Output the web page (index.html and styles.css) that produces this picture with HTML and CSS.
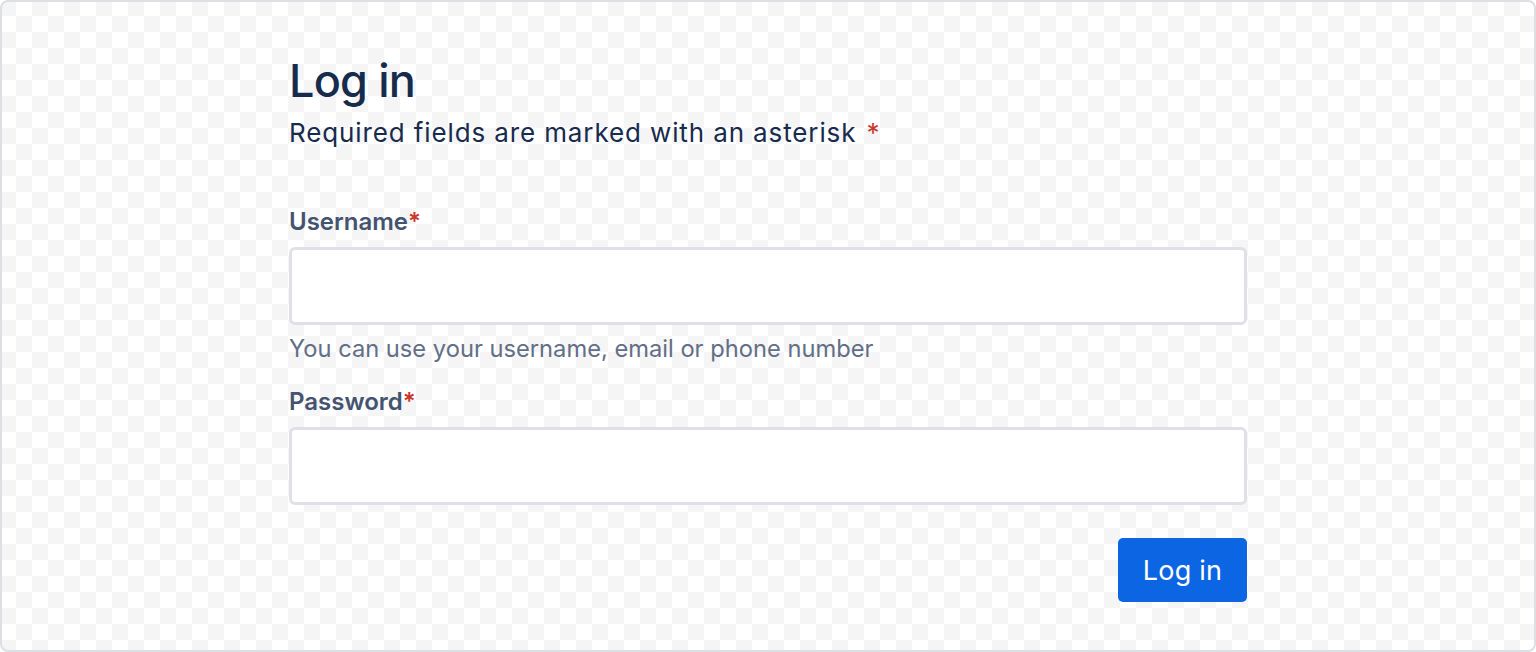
FILE: index.html
```html
<!DOCTYPE html>
<html lang="en">
<head>
<meta charset="utf-8">
<title>Log in</title>
<link rel="stylesheet" href="styles.css">
</head>
<body>
<div class="frame">
  <form class="login">
    <h1 class="title">Log in</h1>
    <p class="subtitle">Required fields are marked with an asterisk <span class="req">*</span></p>
    <div class="field field-first">
      <label class="label" for="username">Username<span class="req">*</span></label>
      <input class="input" id="username" type="text">
      <p class="helper">You can use your username, email or phone number</p>
    </div>
    <div class="field field-second">
      <label class="label" for="password">Password<span class="req">*</span></label>
      <input class="input" id="password" type="password">
    </div>
    <div class="actions">
      <button class="btn" type="button">Log in</button>
    </div>
  </form>
</div>
</body>
</html>
```

FILE: styles.css
```css
* { box-sizing: border-box; }
html, body { margin: 0; padding: 0; }
body {
  font-family: Inter, "Noto Sans", "Liberation Sans", sans-serif;
  color: #172b4d;
  background: #fff;
}
.frame {
  width: 1536px;
  height: 652px;
  border: 2px solid #dcdfe4;
  border-radius: 8px;
  background-color: #fff;
  background-image: conic-gradient(#ffffff 25%, #f5f5f5 0 50%, #ffffff 0 75%, #f5f5f5 0);
  background-size: 32px 32px;
  background-position: -2px -2px;
  overflow: hidden;
  display: flex;
  justify-content: center;
}
.login {
  width: 958px;
  padding-top: 51px;
  display: flex;
  flex-direction: column;
}
.title {
  margin: 0;
  font-size: 45px;
  font-weight: 500;
  line-height: 56px;
  color: #172b4d;
  letter-spacing: -0.8px;
}
.subtitle {
  margin: 8px 0 0;
  font-size: 26px;
  line-height: 32px;
  letter-spacing: 0.88px;
  color: #172b4d;
}
.subtitle .req { margin-left: 2px; }
.req { color: #c9372c; }
.field { display: flex; flex-direction: column; }
.field-first { margin-top: 59px; }
.field-second { margin-top: 25px; }
.label {
  font-size: 24px;
  font-weight: 600;
  line-height: 28px;
  color: #44546f;
  margin-bottom: 11px;
}
.input {
  display: block;
  width: 100%;
  height: 78px;
  border: 3px solid #dfe1e6;
  border-radius: 6px;
  background: #fff;
  outline: none;
  font: inherit;
}
.helper {
  margin: 10px 0 0;
  font-size: 23.7px;
  line-height: 28px;
  color: #626f86;
}
.actions {
  display: flex;
  justify-content: flex-end;
  margin-top: 33px;
}
.btn {
  width: 129px;
  height: 64px;
  border: 0;
  border-radius: 5px;
  background: #0c66e4;
  color: #fff;
  font-family: inherit;
  font-size: 27px;
  font-weight: 400;
  letter-spacing: 0.2px;
  padding: 0;
}
```
